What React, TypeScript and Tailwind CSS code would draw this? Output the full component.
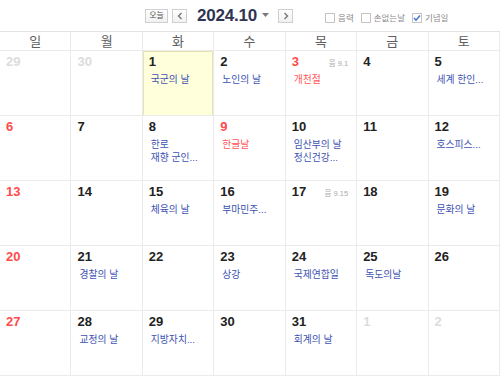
import React from 'react';

type Ev = { text: string; red?: boolean };
type Day = {
  n: number;
  other?: boolean;
  red?: boolean;
  today?: boolean;
  lunar?: string;
  events?: Ev[];
};

const weeks: Day[][] = [
  [
    { n: 29, other: true },
    { n: 30, other: true },
    { n: 1, today: true, events: [{ text: '국군의 날' }] },
    { n: 2, events: [{ text: '노인의 날' }] },
    { n: 3, red: true, lunar: '음 9.1', events: [{ text: '개천절', red: true }] },
    { n: 4 },
    { n: 5, events: [{ text: '세계 한인...' }] },
  ],
  [
    { n: 6, red: true },
    { n: 7 },
    { n: 8, events: [{ text: '한로' }, { text: '재향 군인...' }] },
    { n: 9, red: true, events: [{ text: '한글날', red: true }] },
    { n: 10, events: [{ text: '임산부의 날' }, { text: '정신건강...' }] },
    { n: 11 },
    { n: 12, events: [{ text: '호스피스...' }] },
  ],
  [
    { n: 13, red: true },
    { n: 14 },
    { n: 15, events: [{ text: '체육의 날' }] },
    { n: 16, events: [{ text: '부마민주...' }] },
    { n: 17, lunar: '음 9.15' },
    { n: 18 },
    { n: 19, events: [{ text: '문화의 날' }] },
  ],
  [
    { n: 20, red: true },
    { n: 21, events: [{ text: '경찰의 날' }] },
    { n: 22 },
    { n: 23, events: [{ text: '상강' }] },
    { n: 24, events: [{ text: '국제연합일' }] },
    { n: 25, events: [{ text: '독도의날' }] },
    { n: 26 },
  ],
  [
    { n: 27, red: true },
    { n: 28, events: [{ text: '교정의 날' }] },
    { n: 29, events: [{ text: '지방자치...' }] },
    { n: 30 },
    { n: 31, events: [{ text: '회계의 날' }] },
    { n: 1, other: true },
    { n: 2, other: true },
  ],
];

const dayNames = ['일', '월', '화', '수', '목', '금', '토'];

const font = { fontFamily: '"Liberation Sans", "Noto Sans CJK KR", sans-serif' };

const NavButton = ({ dir }: { dir: 'prev' | 'next' }) => (
  <button className="flex h-[14px] w-[15px] items-center justify-center border border-[#cfcfcf] bg-gradient-to-b from-white to-[#f1f1f1]">
    <svg width="6" height="8" viewBox="0 0 6 8">
      <path
        d={dir === 'prev' ? 'M4.5 1 L1.5 4 L4.5 7' : 'M1.5 1 L4.5 4 L1.5 7'}
        fill="none"
        stroke="#777"
        strokeWidth="1.4"
      />
    </svg>
  </button>
);

const Check = ({ label, checked }: { label: string; checked?: boolean }) => (
  <label className="flex items-center gap-[3px]">
    <span className="relative flex h-[10px] w-[10px] items-center justify-center border border-[#c4c4c4] bg-white">
      {checked && (
        <svg width="8" height="8" viewBox="0 0 8 8" className="absolute">
          <path d="M1 4 L3 6.2 L7 1.5" fill="none" stroke="#3b6fd1" strokeWidth="1.4" />
        </svg>
      )}
    </span>
    <span className="text-[8.5px] leading-none text-[#8a8a8a]">{label}</span>
  </label>
);

const DayCell = ({ d }: { d: Day }) => {
  const numColor = d.other ? 'text-[#dcdcdc]' : d.red ? 'text-[#ff4b4b]' : 'text-[#222222]';
  return (
    <div
      className={`h-[65px] border-r border-b border-[#ebebeb] ${
        d.today ? 'bg-[#ffffdb] shadow-[inset_1px_1px_0_#e6e3b6,inset_-1px_0_0_#e6e3b6]' : 'bg-white'
      }`}
    >
      <div className="flex items-baseline justify-between pt-[3px] pr-[8px] pl-[6px]">
        <span className={`text-[13px] leading-[16px] font-bold ${numColor}`}>{d.n}</span>
        {d.lunar && <span className="text-[7.5px] leading-none text-[#aaaaaa]">{d.lunar}</span>}
      </div>
      {d.events && (
        <div className="mt-[3px] pl-[8px]">
          {d.events.map((e, i) => (
            <div
              key={i}
              className={`text-[9.8px] leading-[13px] whitespace-nowrap ${
                e.red ? 'text-[#ff5454]' : 'text-[#3d52b2]'
              }`}
            >
              {e.text}
            </div>
          ))}
        </div>
      )}
    </div>
  );
};

export default function App() {
  return (
    <div className="h-[376px] w-[500px] overflow-hidden bg-white" style={font}>
      <div className="flex h-[31px] items-center">
        <div className="ml-[145px] flex items-center">
          <button className="flex h-[14px] w-[23px] items-center justify-center border border-[#cfcfcf] bg-gradient-to-b from-white to-[#f1f1f1] text-[8px] leading-none text-[#555]">
            오늘
          </button>
          <div className="ml-[4px]">
            <NavButton dir="prev" />
          </div>
          <span className="ml-[10px] text-[17px] leading-none font-bold tracking-[-0.2px] text-[#2f3452]">
            2024.10
          </span>
          <svg width="7" height="5" viewBox="0 0 7 5" className="ml-[5px]">
            <path d="M0 0 L7 0 L3.5 4 Z" fill="#7a7a7a" />
          </svg>
          <div className="ml-[9px]">
            <NavButton dir="next" />
          </div>
        </div>
        <div className="mt-[5px] ml-[32px] flex items-center gap-[7px]">
          <Check label="음력" />
          <Check label="손없는날" />
          <Check label="기념일" checked />
        </div>
      </div>
      <div className="grid grid-cols-7 border-t border-[#e3e3e3]">
        {dayNames.map((n) => (
          <div
            key={n}
            className="flex h-[19px] items-center justify-center border-r border-b border-[#ebebeb] text-[13px] leading-none text-[#5e5e5e]"
          >
            {n}
          </div>
        ))}
        {weeks.flat().map((d, i) => (
          <DayCell key={i} d={d} />
        ))}
      </div>
    </div>
  );
}
